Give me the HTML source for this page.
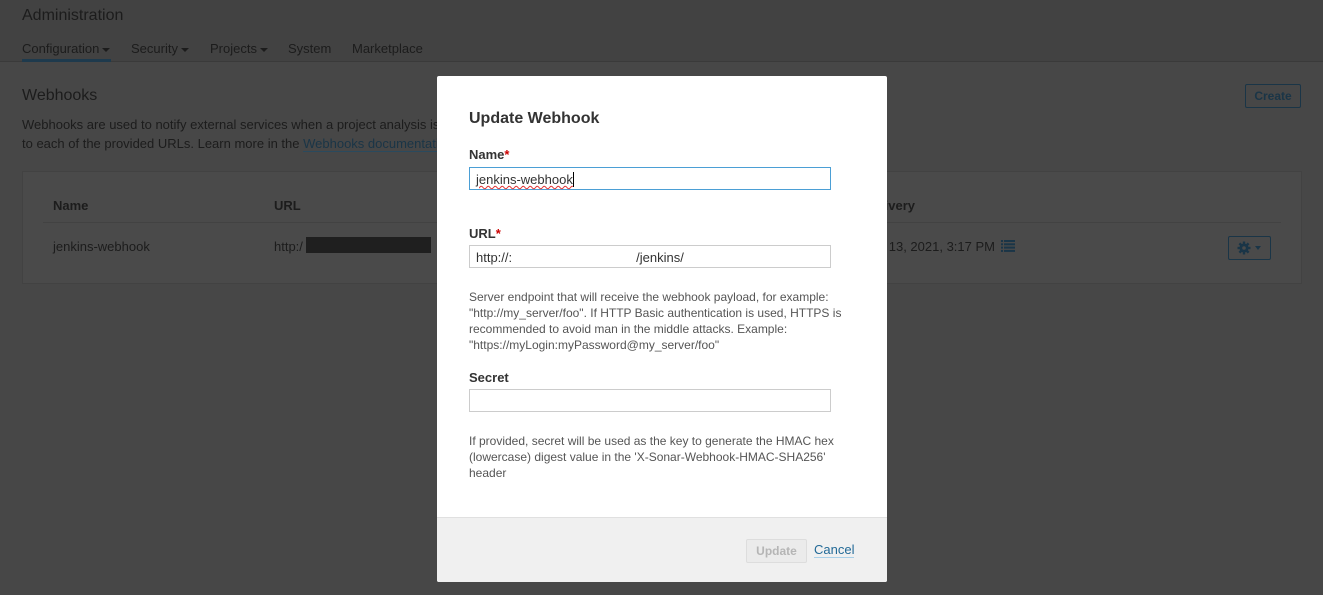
<!DOCTYPE html>
<html><head><meta charset="utf-8"><style>
*{box-sizing:border-box;margin:0;padding:0}
body{width:1323px;height:595px;overflow:hidden;background:#474747;font-family:"Liberation Sans",sans-serif;font-size:13px;color:#1a1a1a;position:relative}
.hdr{position:absolute;left:0;top:0;width:1323px;height:62px;background:#424242;border-bottom:1px solid #3a3a3a}
.a{position:absolute}
.dim{color:#1c1c1c}
.card{position:absolute;left:22px;top:171px;width:1280px;height:113px;background:#4a4a4a;border:1px solid #424242}
.modal{position:absolute;left:437px;top:76px;width:450px;height:506px;background:#fff;border-radius:2px;overflow:hidden}
.foot{position:absolute;left:0;top:441px;width:450px;height:65px;background:#f0f0f0;border-top:1px solid #e0e0e0}
.lbl{position:absolute;left:32px;font-weight:bold;font-size:13px;color:#333}
.lbl b{color:#c00}
.inp{position:absolute;left:32px;width:362px;height:23px;border:1px solid #ccc;font-size:13px;color:#333;padding:4px 6px;background:#fff}
.help{position:absolute;left:32px;width:390px;font-size:12px;line-height:16px;color:#555}
.caret{display:inline-block;width:0;height:0;border-left:4px solid transparent;border-right:4px solid transparent;border-top:4px solid #1c1c1c;vertical-align:middle;margin-left:3px}
</style></head><body>
<div class="hdr"></div>
<div class="a dim" style="left:22px;top:7px;font-size:16px">Administration</div>
<div class="a dim" style="left:22px;top:41px;font-size:13px">Configuration<span class="caret"></span></div>
<div class="a" style="left:22px;top:59px;width:89px;height:3px;background:#1e3a4d"></div>
<div class="a dim" style="left:131px;top:41px">Security<span class="caret"></span></div>
<div class="a dim" style="left:210px;top:41px">Projects<span class="caret"></span></div>
<div class="a dim" style="left:288px;top:41px">System</div>
<div class="a dim" style="left:352px;top:41px">Marketplace</div>
<div class="a dim" style="left:22px;top:87px;font-size:16px">Webhooks</div>
<div class="a dim" style="left:22px;top:115px;line-height:19px;width:420px;white-space:nowrap;overflow:hidden">Webhooks are used to notify external services when a project analysis is<br>to each of the provided URLs. Learn more in the <span style="color:#1a3547;border-bottom:1px solid #2a4a5e">Webhooks documentation</span></div>
<div class="a" style="left:1245px;top:84px;width:56px;height:24px;border:1px solid #1a3547;color:#1a3547;font-weight:bold;font-size:12px;text-align:center;line-height:22px;border-radius:2px">Create</div>
<div class="card"></div>
<div class="a dim" style="left:53px;top:198px;font-weight:bold">Name</div>
<div class="a dim" style="left:274px;top:198px;font-weight:bold">URL</div>
<div class="a dim" style="right:408px;top:198px;font-weight:bold;white-space:nowrap">Last delivery</div>
<div class="a" style="left:43px;top:222px;width:1238px;height:1px;background:#424242"></div>
<div class="a dim" style="left:53px;top:239px">jenkins-webhook</div>
<div class="a dim" style="left:274px;top:239px">http:/</div>
<div class="a" style="left:306px;top:237px;width:125px;height:16px;background:#1f1f1f"></div>
<div class="a dim" style="right:328px;top:239px;white-space:nowrap">January 13, 2021, 3:17 PM</div>
<svg class="a" style="left:1001px;top:240px" width="14" height="12" viewBox="0 0 14 12"><g fill="#1a3547"><rect x="0" y="0" width="2" height="2"/><rect x="3" y="0" width="11" height="2"/><rect x="0" y="3.3" width="2" height="2"/><rect x="3" y="3.3" width="11" height="2"/><rect x="0" y="6.6" width="2" height="2"/><rect x="3" y="6.6" width="11" height="2"/><rect x="0" y="9.9" width="2" height="2"/><rect x="3" y="9.9" width="11" height="2"/></g></svg>
<div class="a" style="left:1228px;top:236px;width:43px;height:24px;border:1px solid #1a3547;border-radius:2px"></div>
<svg class="a" style="left:1237px;top:241px" width="14" height="14" viewBox="0 0 14 14"><g fill="#1a3547"><circle cx="7" cy="7" r="4.5"/><rect x="5.8" y="0.5" width="2.4" height="13"/><rect x="0.5" y="5.8" width="13" height="2.4"/><rect x="5.8" y="0.5" width="2.4" height="13" transform="rotate(45 7 7)"/><rect x="5.8" y="0.5" width="2.4" height="13" transform="rotate(-45 7 7)"/></g><circle cx="7" cy="7" r="1.8" fill="#4a4a4a"/></svg>
<div class="a" style="left:1255px;top:246px;border-left:3.5px solid transparent;border-right:3.5px solid transparent;border-top:4px solid #1a3547"></div>

<div class="modal">
<div class="a" style="left:32px;top:34px;font-size:16px;font-weight:bold;color:#333">Update Webhook</div>
<div class="lbl" style="top:71px">Name<b>*</b></div>
<div class="inp" style="top:91px;border-color:#4b9fd5"><span style="text-decoration:underline wavy #e03030;text-decoration-thickness:1px">jenkins-webhook</span><span style="border-left:1px solid #000;margin-left:0"></span></div>
<div class="lbl" style="top:150px">URL<b>*</b></div>
<div class="inp" style="top:169px">http://:<span style="display:inline-block;width:124px"></span>/jenkins/</div>
<div class="help" style="top:213px">Server endpoint that will receive the webhook payload, for example: "http://my_server/foo". If HTTP Basic authentication is used, HTTPS is recommended to avoid man in the middle attacks. Example: "https://myLogin:myPassword@my_server/foo"</div>
<div class="lbl" style="top:294px">Secret</div>
<div class="inp" style="top:313px"></div>
<div class="help" style="top:357px">If provided, secret will be used as the key to generate the HMAC hex (lowercase) digest value in the 'X-Sonar-Webhook-HMAC-SHA256' header</div>
<div class="foot">
<div class="a" style="left:309px;top:21px;width:61px;height:24px;border:1px solid #ddd;background:#ebebeb;color:#b5b5b5;font-weight:bold;font-size:12px;text-align:center;line-height:22px;border-radius:2px">Update</div>
<div class="a" style="left:377px;top:24px;color:#236a97;font-size:13px;border-bottom:1px solid #a9d0e8;line-height:15px">Cancel</div>
</div>
</div>
</body></html>
